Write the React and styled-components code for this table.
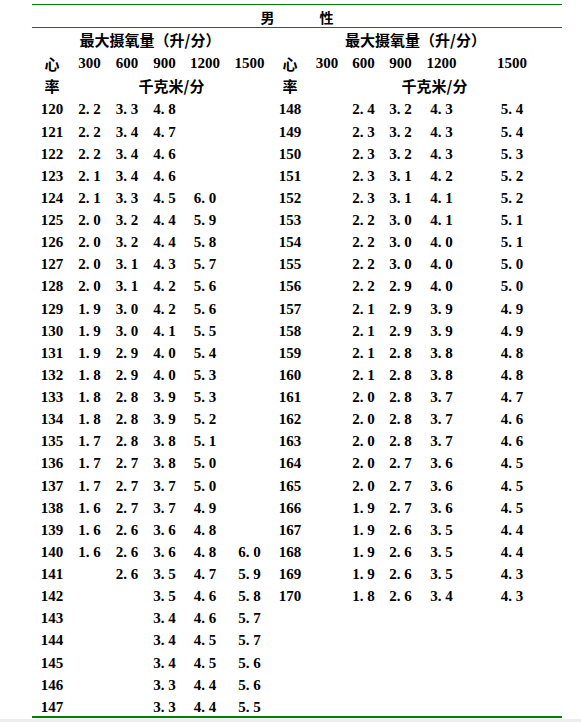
import React from "react";
import styled, { createGlobalStyle } from "styled-components";

const Global = createGlobalStyle`
  html, body { margin: 0; padding: 0; background: #ffffff; }
  body { font-family: "Liberation Serif", "Noto Sans CJK SC", serif; color: #000; }
`;

const Page = styled.div`
  width: 581px;
  box-sizing: border-box;
  padding: 4px 19px 0 32px;
`;

const Sheet = styled.div`
  width: 530px;
  border-top: 1px solid #008000;
  border-bottom: 2px solid #008000;
`;

const Title = styled.div`
  height: 23px;
  display: flex;
  align-items: center;
  justify-content: center;
  gap: 45px;
  padding-top: 1px;
  box-sizing: border-box;
  font-family: "Noto Sans CJK SC", sans-serif;
  font-weight: 700;
  font-size: 14px;
  border-bottom: 1px solid #008000;
`;

const Grid = styled.div`
  display: grid;
  grid-template-columns: 40px 35px 40px 35px 46px 43px 38px 36px 37px 37px 45px 96px;
  grid-template-rows: 24px 22px 22.4px repeat(28, 22.13px);
  padding-right: 2px;
  font-weight: 700;
  font-size: 15px;
`;

const Cell = styled.div`
  grid-column: ${(p) => p.$col} / span ${(p) => p.$span || 1};
  grid-row: ${(p) => p.$row};
  display: flex;
  align-items: center;
  justify-content: center;
  box-sizing: border-box;
  padding-top: ${(p) => (p.$data ? "5px" : "0")};
  padding-bottom: ${(p) => (p.$up ? "2px" : "0")};
  white-space: nowrap;
  line-height: 1;
  font-family: ${(p) =>
    p.$cjk ? '"Noto Sans CJK SC", sans-serif' : '"Liberation Serif", "Noto Sans CJK SC", serif'};
  font-size: 15px;
`;

const Dot = styled.span`
  margin-right: 3.8px;
`;

const Bottom = styled.div`
  height: 3px;
  margin-top: 1px;
  background: #ececf1;
`;

const left = [
  [120, "2.2", "3.3", "4.8", "", ""],
  [121, "2.2", "3.4", "4.7", "", ""],
  [122, "2.2", "3.4", "4.6", "", ""],
  [123, "2.1", "3.4", "4.6", "", ""],
  [124, "2.1", "3.3", "4.5", "6.0", ""],
  [125, "2.0", "3.2", "4.4", "5.9", ""],
  [126, "2.0", "3.2", "4.4", "5.8", ""],
  [127, "2.0", "3.1", "4.3", "5.7", ""],
  [128, "2.0", "3.1", "4.2", "5.6", ""],
  [129, "1.9", "3.0", "4.2", "5.6", ""],
  [130, "1.9", "3.0", "4.1", "5.5", ""],
  [131, "1.9", "2.9", "4.0", "5.4", ""],
  [132, "1.8", "2.9", "4.0", "5.3", ""],
  [133, "1.8", "2.8", "3.9", "5.3", ""],
  [134, "1.8", "2.8", "3.9", "5.2", ""],
  [135, "1.7", "2.8", "3.8", "5.1", ""],
  [136, "1.7", "2.7", "3.8", "5.0", ""],
  [137, "1.7", "2.7", "3.7", "5.0", ""],
  [138, "1.6", "2.7", "3.7", "4.9", ""],
  [139, "1.6", "2.6", "3.6", "4.8", ""],
  [140, "1.6", "2.6", "3.6", "4.8", "6.0"],
  [141, "", "2.6", "3.5", "4.7", "5.9"],
  [142, "", "", "3.5", "4.6", "5.8"],
  [143, "", "", "3.4", "4.6", "5.7"],
  [144, "", "", "3.4", "4.5", "5.7"],
  [145, "", "", "3.4", "4.5", "5.6"],
  [146, "", "", "3.3", "4.4", "5.6"],
  [147, "", "", "3.3", "4.4", "5.5"],
];

const right = [
  [148, "", "2.4", "3.2", "4.3", "5.4"],
  [149, "", "2.3", "3.2", "4.3", "5.4"],
  [150, "", "2.3", "3.2", "4.3", "5.3"],
  [151, "", "2.3", "3.1", "4.2", "5.2"],
  [152, "", "2.3", "3.1", "4.1", "5.2"],
  [153, "", "2.2", "3.0", "4.1", "5.1"],
  [154, "", "2.2", "3.0", "4.0", "5.1"],
  [155, "", "2.2", "3.0", "4.0", "5.0"],
  [156, "", "2.2", "2.9", "4.0", "5.0"],
  [157, "", "2.1", "2.9", "3.9", "4.9"],
  [158, "", "2.1", "2.9", "3.9", "4.9"],
  [159, "", "2.1", "2.8", "3.8", "4.8"],
  [160, "", "2.1", "2.8", "3.8", "4.8"],
  [161, "", "2.0", "2.8", "3.7", "4.7"],
  [162, "", "2.0", "2.8", "3.7", "4.6"],
  [163, "", "2.0", "2.8", "3.7", "4.6"],
  [164, "", "2.0", "2.7", "3.6", "4.5"],
  [165, "", "2.0", "2.7", "3.6", "4.5"],
  [166, "", "1.9", "2.7", "3.6", "4.5"],
  [167, "", "1.9", "2.6", "3.5", "4.4"],
  [168, "", "1.9", "2.6", "3.5", "4.4"],
  [169, "", "1.9", "2.6", "3.5", "4.3"],
  [170, "", "1.8", "2.6", "3.4", "4.3"],
];

function Value({ v }) {
  if (!v) return null;
  const [a, b] = v.split(".");
  return (
    <>
      {a}
      <Dot>.</Dot>
      {b}
    </>
  );
}

function Half({ rows, startCol }) {
  return rows.map((r, i) => {
    const row = i + 4;
    return (
      <React.Fragment key={r[0]}>
        <Cell $data $col={startCol} $row={row}>{r[0]}</Cell>
        {r.slice(1).map((v, j) =>
          v ? (
            <Cell $data key={j} $col={startCol + 1 + j} $row={row}>
              <Value v={v} />
            </Cell>
          ) : null
        )}
      </React.Fragment>
    );
  });
}

const loads = ["300", "600", "900", "1200", "1500"];

export default function App() {
  return (
    <>
      <Global />
      <Page>
        <Sheet>
          <Title>
            <span>男</span>
            <span>性</span>
          </Title>
          <Grid>
            <Cell $cjk $up $col={2} $span={4} $row={1}>最大摄氧量（升/分）</Cell>
            <Cell $cjk $up $col={7} $span={6} $row={1}>最大摄氧量（升/分）</Cell>

            <Cell $cjk $col={1} $row={2}>心</Cell>
            {loads.map((l, i) => (
              <Cell key={"l" + l} $col={2 + i} $row={2}>{l}</Cell>
            ))}
            <Cell $cjk $col={7} $row={2}>心</Cell>
            {loads.map((l, i) => (
              <Cell key={"r" + l} $col={8 + i} $row={2}>{l}</Cell>
            ))}

            <Cell $cjk $col={1} $row={3}>率</Cell>
            <Cell $cjk $col={2} $span={5} $row={3}>千克米/分</Cell>
            <Cell $cjk $col={7} $row={3}>率</Cell>
            <Cell $cjk $col={8} $span={5} $row={3}>千克米/分</Cell>

            <Half rows={left} startCol={1} />
            <Half rows={right} startCol={7} />
          </Grid>
        </Sheet>
      </Page>
      <Bottom />
    </>
  );
}
